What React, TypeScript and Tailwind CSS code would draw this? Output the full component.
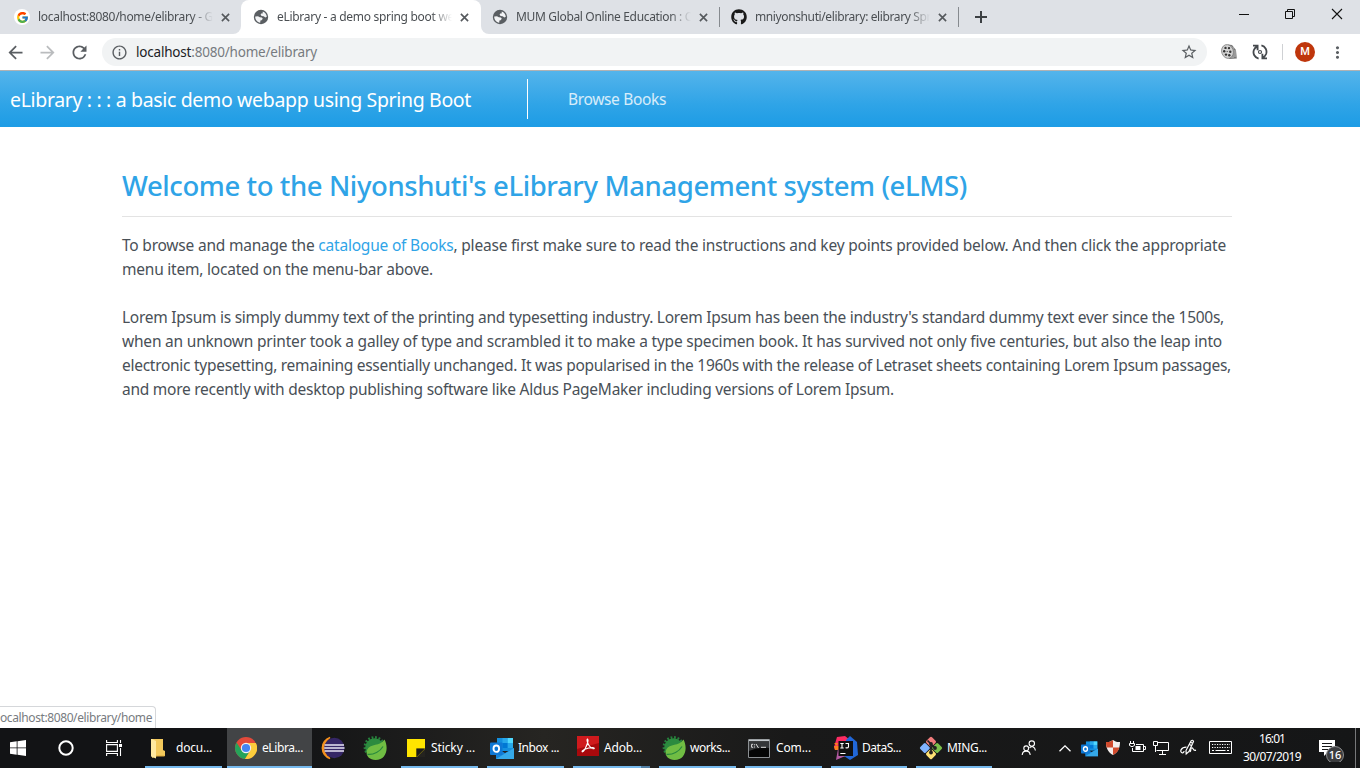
import { useLayoutEffect, useRef } from "react";
import type { ReactNode } from "react";
import { FcGoogle } from "react-icons/fc";
import { FaGithub } from "react-icons/fa";
import {
  MdArrowBack,
  MdArrowForward,
  MdRefresh,
  MdInfoOutline,
  MdStarBorder,
  MdMoreVert,
} from "react-icons/md";

/* One line of text whose tracking is adjusted so that it spans a given width. */
function Line({ w, className = "", children }: { w: number; className?: string; children: ReactNode }) {
  const ref = useRef<HTMLSpanElement>(null);
  useLayoutEffect(() => {
    const el = ref.current;
    if (!el) return;
    const apply = () => {
      el.style.letterSpacing = "0px";
      const natural = el.getBoundingClientRect().width;
      const count = (el.textContent || "").length;
      el.style.letterSpacing = `${(w - natural) / count}px`;
    };
    apply();
    document.fonts.ready.then(apply);
  }, [w]);
  return (
    <span ref={ref} className={`inline-block shrink-0 whitespace-pre ${className}`}>
      {children}
    </span>
  );
}

function Globe() {
  return (
    <svg width="16" height="16" viewBox="0 0 16 16" className="shrink-0">
      <circle cx="8" cy="8" r="7.2" fill="#5a5e62" />
      <path
        d="M9.8 2.6 C12 3.3 13.6 5.3 13.8 7.8 L12.4 8.6 L10.6 7.2 L8.6 7 L7.6 5.8 L8.2 4.6 L9.6 4.4 Z M2.3 7.4 L5 7.2 L6.8 8.2 L8.8 8.4 L9.8 9.8 L8.6 11.2 L7.4 11.6 L7.2 13.7 C4.4 13.4 2.3 11 2.2 8 Z"
        fill="#f2f3f5"
      />
    </svg>
  );
}

function Close() {
  return (
    <svg width="9" height="9" viewBox="0 0 10 10" className="shrink-0">
      <path d="M1 1 L9 9 M9 1 L1 9" stroke="#55595d" strokeWidth="1.8" />
    </svg>
  );
}

function Tab({
  icon,
  text,
  w,
  box,
  fade,
}: {
  icon: ReactNode;
  text: string;
  w: number;
  box: string;
  fade: string;
}) {
  return (
    <div className={`flex h-full items-center ${box}`}>
      <div className="flex w-4 shrink-0 justify-center">{icon}</div>
      <div className={`ml-2 flex h-5 items-center overflow-hidden text-[12px] text-[#4b4f53] ${fade}`}>
        <Line w={w}>{text}</Line>
      </div>
      <div className="ml-2">
        <Close />
      </div>
    </div>
  );
}

function Browser() {
  return (
    <>
      <div className="flex h-[34px] shrink-0 bg-white">
        <Tab
          box="w-[241px] rounded-br-lg bg-[#dee1e6] pl-[14px]"
          fade="w-[175px] [mask-image:linear-gradient(to_right,black_88%,transparent)]"
          w={175}
          text="localhost:8080/home/elibrary - G"
          icon={
            <span className="flex size-4 items-center justify-center rounded-full bg-white">
              <FcGoogle size={13} />
            </span>
          }
        />
        <div className="h-full w-[240px] bg-[linear-gradient(#dee1e6_50%,#fff_50%)]">
          <Tab
            box="w-[240px] rounded-t-lg bg-white pl-3"
            fade="w-[175px] [mask-image:linear-gradient(to_right,black_88%,transparent)]"
            w={177}
            text="eLibrary - a demo spring boot we"
            icon={<Globe />}
          />
        </div>
        <div className="flex h-full flex-1 rounded-bl-lg bg-[#dee1e6]">
          <Tab
            box="w-[238px] pl-[11px]"
            fade="w-[175px] [mask-image:linear-gradient(to_right,black_88%,transparent)]"
            w={176}
            text="MUM Global Online Education : C"
            icon={<Globe />}
          />
          <div className="mt-[7px] h-5 w-px bg-[#868a8f]" />
          <Tab
            box="w-[238px] pl-[11px]"
            fade="w-[175px] [mask-image:linear-gradient(to_right,black_88%,transparent)]"
            w={176}
            text="mniyonshuti/elibrary: elibrary Spr"
            icon={<FaGithub size={16} color="#191919" />}
          />
          <div className="mt-[7px] h-5 w-px bg-[#868a8f]" />
          <svg width="12" height="12" viewBox="0 0 12 12" className="mt-[11px] ml-4">
            <path d="M6 0 V12 M0 6 H12" stroke="#3c4043" strokeWidth="2" />
          </svg>
          <div className="ml-auto flex pt-2 pr-[17px]">
            <svg width="10" height="12" viewBox="0 0 10 12">
              <path d="M0 6.5 H10" stroke="#111" />
            </svg>
            <svg width="10" height="12" viewBox="0 0 10 12" className="ml-9">
              <path d="M0.5 3.5 H7.5 V10.5 H0.5 Z M2.5 3.5 V1.5 H9.5 V8.5 H7.5" fill="none" stroke="#111" />
            </svg>
            <svg width="12" height="12" viewBox="0 0 12 12" className="ml-9">
              <path d="M1 1 L11 11 M11 1 L1 11" stroke="#111" strokeWidth="1.1" />
            </svg>
          </div>
        </div>
      </div>
      <div className="flex h-9 shrink-0 items-center bg-white pl-[5px] text-[#5a5e62]">
        <MdArrowBack size={21} />
        <MdArrowForward size={21} className="ml-[11px] text-[#babcbe]" />
        <MdRefresh size={21} className="ml-[11px]" />
        <div className="ml-3 flex h-7 w-[1105px] items-center rounded-full bg-[#f1f3f4] pr-[9px] pl-[9px]">
          <MdInfoOutline size={17} />
          <Line w={181} className="ml-2 pt-px text-[13.5px] text-[#777b80]">
            <span className="text-[#202124]">localhost</span>:8080/home/elibrary
          </Line>
          <MdStarBorder size={18} className="ml-auto" />
        </div>
        <svg width="18" height="18" viewBox="0 0 18 18" className="ml-[13px]">
          <path d="M8 1.5 L12 2 L16 7 L16.8 15.5 L9 16 Z" fill="#777" />
          <path d="M11 3 V15 M13 4 V15 M15 7 V14" stroke="#ddd" strokeWidth=".7" />
          <ellipse cx="7.5" cy="8.5" rx="5.8" ry="7" transform="rotate(-18 7.5 8.5)" fill="#d2d2d2" stroke="#777" strokeWidth=".7" />
          <g fill="#333">
            <circle cx="5.5" cy="4.9" r="1.2" />
            <circle cx="9" cy="5.1" r="1.2" />
            <circle cx="4.2" cy="8.3" r="1.2" />
            <circle cx="10.3" cy="8.7" r="1.2" />
            <circle cx="6" cy="11.6" r="1.2" />
            <circle cx="9.3" cy="12.2" r="1.2" />
            <circle cx="7.2" cy="8.5" r=".6" />
          </g>
        </svg>
        <svg width="16" height="16" viewBox="0 0 16 16" className="ml-[14px]" fill="none" stroke="#45494d" strokeWidth="1.8">
          <path d="M6.6 14.6 C2.6 13.6 .6 9.6 1.9 6 C2.6 4.2 3.8 3.2 5 2.6 M1 1.7 H5.6 V6.2" />
          <path d="M9.4 1.4 C13.4 2.4 15.4 6.4 14.1 10 C13.4 11.8 12.2 12.8 11 13.4 M15 14.3 H10.4 V9.8" />
          <circle cx="8" cy="8" r="1.5" strokeWidth="1.2" />
        </svg>
        <div className="ml-[14px] h-4 w-px bg-[#cfd1d4]" />
        <div className="ml-3 flex size-5 items-center justify-center rounded-full bg-[#bf360c] font-[Roboto] text-[11px] font-medium text-white">
          M
        </div>
        <MdMoreVert size={19} className="ml-[13px]" />
      </div>
    </>
  );
}

function Page() {
  return (
    <>
      <div className="h-px shrink-0 bg-[#b0b2b4]" />
      <header className="flex h-14 shrink-0 items-center bg-[linear-gradient(#54b4eb,#2fa4e7_60%,#1d9ce5)] pl-[10px] text-white">
        <Line w={461} className="pt-[2px] text-[19.5px]">
          eLibrary : : : a basic demo webapp using Spring Boot
        </Line>
        <div className="ml-14 h-10 w-px bg-white" />
        <Line w={98} className="ml-10 pt-px text-[15.5px] text-white/80">
          Browse Books
        </Line>
      </header>
      <main className="min-h-0 flex-1 bg-white pr-32 pl-[122px] text-[#495057]">
        <h2 className="flex h-[90px] items-center border-b border-[#e3e3e3] pt-[28px] text-[#2fa4e7]">
          <Line w={845} className="text-[27.5px] font-medium">
            Welcome to the Niyonshuti's eLibrary Management system (eLMS)
          </Line>
        </h2>
        <p className="flex flex-col items-start pt-4 text-[15.5px] leading-6">
          <Line w={1104}>
            To browse and manage the <a className="text-[#2fa4e7]">catalogue of Books</a>, please first make sure to read
            {" the instructions and key points provided below. And then click the appropriate"}
          </Line>
          <Line w={311}>menu item, located on the menu-bar above.</Line>
        </p>
        <p className="flex flex-col items-start pt-6 text-[15.5px] leading-6">
          <Line w={1102}>
            Lorem Ipsum is simply dummy text of the printing and typesetting industry. Lorem Ipsum has been the industry's standard dummy text ever since the 1500s,
          </Line>
          <Line w={1100}>
            when an unknown printer took a galley of type and scrambled it to make a type specimen book. It has survived not only five centuries, but also the leap into
          </Line>
          <Line w={1109}>
            electronic typesetting, remaining essentially unchanged. It was popularised in the 1960s with the release of Letraset sheets containing Lorem Ipsum passages,
          </Line>
          <Line w={772}>
            and more recently with desktop publishing software like Aldus PageMaker including versions of Lorem Ipsum.
          </Line>
        </p>
      </main>
      <div className="flex h-[22px] w-[156px] shrink-0 items-center overflow-hidden rounded-tr border-t border-r border-[#d5d7da] bg-white text-[12px] text-[#777b80]">
        <Line w={152} className="pt-px">ocalhost:8080/elibrary/home</Line>
      </div>
    </>
  );
}

function Spring() {
  return (
    <svg width="24" height="24" viewBox="0 0 24 24">
      <circle cx="11.5" cy="11" r="9.6" fill="none" stroke="#26823c" strokeWidth="2.6" strokeDasharray="1.8 1.7" />
      <circle cx="11.5" cy="11.5" r="9.3" fill="#2c8b3f" />
      <path d="M21.5 3.5 C26 12 23.5 24 12.5 24 C5 24 2 18 4.4 13.2 C7.5 7.5 17 10.5 21.5 3.5 Z" fill="#70bd43" />
      <path d="M4.5 18.4 C11 19 17 15.5 20 10.5" fill="none" stroke="#29893e" strokeWidth="1.2" />
    </svg>
  );
}

function Outlook({ size }: { size: number }) {
  return (
    <svg width={size} height={size} viewBox="0 0 24 24">
      <path d="M7 2 H23 V15 H7 Z" fill="#1490df" />
      <path d="M12.5 2 H17.7 V7 H12.5 Z" fill="#28a8ea" />
      <path d="M17.7 2 H23 V7 H17.7 Z" fill="#50d9ff" />
      <path d="M12.5 7 H17.7 V12 H12.5 Z" fill="#0078d4" />
      <path d="M17.7 7 H23 V12 H17.7 Z" fill="#28a8ea" />
      <path d="M6 12 L15 17 L24 12 V23 H6 Z" fill="#1684d8" />
      <path d="M6 23 L24 12 V23 Z" fill="#35a9e9" />
      <rect x="0" y="6.5" width="12.5" height="12.5" rx="1" fill="#0f78d4" />
      <ellipse cx="6.3" cy="12.7" rx="2.8" ry="3.2" fill="none" stroke="#fff" strokeWidth="1.9" />
    </svg>
  );
}

function Task({
  box,
  bar = "bg-[#76b9ed]",
  slot,
  gap = "pl-1",
  icon,
  text,
  w,
}: {
  box: string;
  bar?: string;
  slot: string;
  gap?: string;
  icon: ReactNode;
  text: string;
  w: number;
}) {
  return (
    <div className={`flex h-10 shrink-0 flex-col ${box}`}>
      <div className="flex h-[38px] items-center">
        <div className={`flex shrink-0 justify-center pt-[2px] ${slot}`}>{icon}</div>
        <div className={`flex ${gap}`}>
          <Line w={w} className="pt-[2px] text-[12px] text-white">
            {text}
          </Line>
        </div>
      </div>
      <div className={`h-[2px] ${bar}`} />
    </div>
  );
}

function Taskbar() {
  return (
    <footer className="flex h-10 shrink-0 bg-[linear-gradient(to_right,#121315,#121315_20%,#262522_40%,#191919_58%,#151617)] text-white">
      <div className="flex w-9 items-center justify-center">
        <svg width="16" height="16" viewBox="0 0 16 16" fill="#fff">
          <path d="M0 2.2 L6.7 1.3 V7.5 H0 Z M7.5 1.2 L16 0 V7.5 H7.5 Z M0 8.3 H6.7 V14.7 L0 13.8 Z M7.5 8.3 H16 V16 L7.5 14.8 Z" />
        </svg>
      </div>
      <div className="flex w-[60px] items-center justify-center">
        <svg width="18" height="18" viewBox="0 0 18 18">
          <circle cx="9" cy="9" r="6.7" fill="none" stroke="#fff" strokeWidth="2" />
        </svg>
      </div>
      <div className="flex w-[36px] items-center justify-center">
        <svg width="17" height="16" viewBox="0 0 17 16" fill="none" stroke="#fff" strokeWidth="1.1">
          <path d="M.6 0 V2.5 H11.4 V0 M.6 16 V13.5 H11.4 V16 M.6 4.6 H11.4 V11.4 H.6 Z M14.5 0 V3 M14.5 8 V16" />
          <path d="M13 4 H16 V7 H13 Z" fill="#fff" stroke="none" />
        </svg>
      </div>
      <Task
        box="ml-[13px] w-[77px]"
        slot="w-[27px]"
        w={36}
        text="docu..."
        icon={
          <svg width="15" height="21" viewBox="0 0 15 21">
            <path d="M1 1 H12 V12 L14 13 V18 H6 L1 20 Z" fill="#f3c95c" />
            <path d="M1 1 L5 3 V20.5 L0 18.5 V1 Z" fill="#ffe9a0" />
            <path d="M5 18 H13.5" stroke="#dba83b" />
          </svg>
        }
      />
      <Task
        box="ml-[5px] w-[85px] bg-[#424446]"
        slot="w-[38px]"
        gap="-ml-[3px]"
        w={41}
        text="eLibra..."
        icon={
          <svg width="22" height="22" viewBox="0 0 22 22">
            <circle cx="11" cy="11" r="11" fill="#e24a3b" />
            <path d="M1.5 5.5 A11 11 0 0 0 10 22 L15.3 13.5 L11 11 L6.7 13.5 Z" fill="#25a35a" />
            <path d="M20.6 5.5 A11 11 0 0 1 10 22 L15.3 13.5 A5 5 0 0 0 11 6 L20.8 6 Z" fill="#fccd3c" />
            <circle cx="11" cy="11" r="5.2" fill="#f3f3f3" />
            <circle cx="11" cy="11" r="4.1" fill="#4285f4" />
          </svg>
        }
      />
      <div className="flex w-[42px] items-center justify-center">
        <svg width="24" height="24" viewBox="0 0 24 24">
          <path d="M9 1.5 A11 11 0 0 0 9 22.5 A13 13 0 0 1 9 1.5 Z" fill="#f6921e" stroke="#f6921e" strokeWidth="1.4" />
          <circle cx="13.3" cy="12" r="10.2" fill="#352666" />
          <path d="M3.6 9 H23 M3.2 12 H23.5 M3.6 15 H23" stroke="#e8e5f4" strokeWidth="1.5" />
        </svg>
      </div>
      <div className="flex w-[42px] items-center justify-center">
        <Spring />
      </div>
      <Task
        box="ml-[5px] w-[77px]"
        slot="w-[28px] pl-[2px]"
        gap="pl-[2px]"
        w={44}
        text="Sticky ..."
        icon={
          <svg width="18" height="18" viewBox="0 0 18 18">
            <path d="M0 0 H18 V18 H0 Z" fill="#ffe500" />
            <path d="M9 18 V9.5 H18 V18 Z" fill="#a39300" />
            <path d="M9.5 9.5 H18 L9.5 18 Z" fill="#1b1b1b" />
            <path d="M10 18 L18 10 V18 Z" fill="#24231f" />
          </svg>
        }
      />
      <Task box="ml-[9px] w-[77px]" slot="w-[30px]" gap="pl-px" w={41} text="Inbox ..." icon={<Outlook size={24} />} />
      <Task
        box="ml-[9px] w-[77px]"
        bar="bg-[linear-gradient(to_right,#76b9ed_68px,#527fa4_68px)]"
        slot="w-[30px]"
        gap="pl-px"
        w={38}
        text="Adob..."
        icon={
          <svg width="22" height="20" viewBox="0 0 22 20" className="-mt-1">
            <path d="M0 0 H22 V20 H0 Z" fill="#a8090c" />
            <path d="M0 0 H22 V7 L0 13 Z" fill="#cf1a1d" />
            <path
              d="M10.5 3 C9 3.5 11.2 9.2 13.8 11.6 C15.6 13.2 17.7 13 17.2 12 C16.2 10.7 7.6 12.3 5.3 14.8 C4.5 16.2 6 16.4 7.4 14 C9 11.2 12.1 4.4 10.5 3 Z"
              fill="none"
              stroke="#fff"
              strokeWidth="1.1"
            />
          </svg>
        }
      />
      <Task box="ml-[9px] w-[77px]" slot="w-[30px]" gap="pl-px" w={40} text="works..." icon={<Spring />} />
      <Task
        box="ml-[9px] w-[77px]"
        slot="w-[28px]"
        gap="pl-[3px]"
        w={35}
        text="Com..."
        icon={
          <svg width="22" height="19" viewBox="0 0 22 19">
            <path d="M.5 .5 H21.5 V18.5 H.5 Z" fill="#050505" stroke="#8b8f92" />
            <path d="M1 3 H21 V9 Q10 8 1 12 Z" fill="#343638" />
            <path d="M1 1.5 H21" stroke="#c4c9cd" strokeWidth="1.6" />
            <path d="M5.2 5.3 H3.6 V8.3 H5.2 M6.5 5.3 V6.3 M6.5 7.5 V8.5 M8 5 L10.5 9 M13 8.3 H18" fill="none" stroke="#ddd" strokeWidth="1" />
          </svg>
        }
      />
      <Task
        box="ml-[9px] w-[76px]"
        slot="w-[30px]"
        gap="pl-px"
        w={39}
        text="DataS..."
        icon={
          <svg width="24" height="24" viewBox="0 0 24 24">
            <path d="M3 1 L11 0 L16 4 L12 14 L1 14 L0 11 Z" fill="#fc2b62" />
            <path d="M0 10 L6 10 L5 14 L1 14 Z M4 7 H0 L3 10 Z" fill="#fc801d" />
            <path d="M4 13 L13 20 L9 21 L2 24 Z" fill="#b45aa3" />
            <path d="M16 0 L23 6 L24 19 L16 24 L10 20 L12 4 Z" fill="#2167d8" />
            <rect x="4.5" y="5" width="14.5" height="15" fill="#111" />
            <path d="M6.3 7.5 H9.7 M8 7.5 V12 M6.3 12 H9.7 M11.5 7.5 H14.5 V10.8 Q14.2 12.2 11.5 11.8 M6.3 17.5 H11.5" fill="none" stroke="#fff" strokeWidth="1.1" />
          </svg>
        }
      />
      <Task
        box="ml-[9px] w-[76px]"
        slot="w-[30px]"
        gap="pl-px"
        w={40}
        text="MING..."
        icon={
          <svg width="24" height="24" viewBox="0 0 24 24">
            <g transform="rotate(45 12 12)">
              <rect x="3.7" y="3.7" width="7.9" height="7.9" rx="1.5" fill="#f17c7c" />
              <rect x="12.4" y="3.7" width="7.9" height="7.9" rx="1.5" fill="#7cc04b" />
              <rect x="3.7" y="12.4" width="7.9" height="7.9" rx="1.5" fill="#80b3ff" />
              <rect x="12.4" y="12.4" width="7.9" height="7.9" rx="1.5" fill="#ffe174" />
            </g>
            <path d="M8.5 4.5 L12 8 V17 M12 8.5 L16 12" fill="none" stroke="#231f20" strokeWidth="1.7" />
            <circle cx="12" cy="8" r="1.9" fill="#231f20" />
            <circle cx="12" cy="16.5" r="1.9" fill="#231f20" />
            <circle cx="16" cy="12" r="1.9" fill="#231f20" />
          </svg>
        }
      />
      <div className="ml-6 flex w-[26px] items-center justify-center">
        <svg width="16" height="16" viewBox="0 0 16 16" fill="none" stroke="#fff" strokeWidth="1.1">
          <circle cx="10.8" cy="3.6" r="2.7" />
          <path d="M8.6 8 C10 5.6 14 6.5 14.4 10.5" />
          <circle cx="5.2" cy="8.3" r="2.4" />
          <path d="M1.2 15 C1.5 9.8 8.8 9.8 9.2 15" />
        </svg>
      </div>
      <div className="ml-[11px] flex w-6 items-center justify-center">
        <svg width="12" height="7" viewBox="0 0 12 7">
          <path d="M.5 6.3 L6 .9 L11.5 6.3" fill="none" stroke="#fff" strokeWidth="1.3" />
        </svg>
      </div>
      <div className="flex w-6 items-center justify-center">
        <Outlook size={17} />
      </div>
      <div className="flex w-6 items-center justify-center">
        <svg width="14" height="15" viewBox="0 0 14 15" className="-mt-px">
          <path d="M0 2 C3 2.3 5 1.5 7 0 C9 1.5 11 2.3 14 2 C14 8 12 12.5 7 15 C2 12.5 0 8 0 2 Z" fill="#f5eeec" />
          <path d="M7 0 V7.5 H.7 C.1 5.5 0 4 0 2 C3 2.3 5 1.5 7 0 Z M7 7.5 H13.4 C12.4 11 10.5 13.3 7 15 Z" fill="#d24a2c" />
        </svg>
      </div>
      <div className="flex w-6 items-center justify-center">
        <svg width="17" height="13" viewBox="0 0 17 13" className="-mt-px" fill="none" stroke="#fff" strokeWidth="1">
          <path d="M7 3.5 H14.5 V10.5 H3.5 V7 M14.5 5.5 H16.5 V8.5 H14.5" />
          <path d="M6.5 5 H11.5 V9 H6.5 Z" fill="#fff" stroke="none" />
          <path d="M1.5 0 V2 M4.5 0 V2 M.5 2.5 H5.5 V4.5 Q3 7 .5 4.5 Z" />
        </svg>
      </div>
      <div className="flex w-6 items-center justify-center">
        <svg width="17" height="14" viewBox="0 0 17 14" fill="none" stroke="#fff" strokeWidth="1">
          <path d="M5 1.5 H15.5 V9.5 H3.5 M9.5 9.5 V13 M6 13.5 H13 M.5 .5 H4.5 V4.5 H.5 Z M2.5 4.5 V11" />
        </svg>
      </div>
      <div className="ml-[3px] flex w-6 items-center justify-center">
        <svg width="17" height="17" viewBox="0 0 17 17" className="-mt-px" fill="none" stroke="#fff" strokeWidth="1.2">
          <path d="M6 11.5 L11 2 Q12.8 .3 13.5 2.5 L9 12.5 L6.2 15 Z M10.5 3.2 L13 4.6 M9.5 5.5 L11.8 6.8" />
          <path d="M6.5 8.2 C1 8 -.8 13 2.3 13.8 Q4 14 4 12 M9.5 12.5 C11.5 13.5 10 8.5 12 8.8 C14 9.2 12.5 12.2 16 11.2" />
        </svg>
      </div>
      <div className="ml-2 flex w-6 items-center justify-center">
        <svg width="23" height="13" viewBox="0 0 23 13" className="-mt-px" fill="none" stroke="#fff">
          <path d="M.5 .5 H22.5 V12.5 H.5 Z" />
          <path d="M3 3.5 H21 M3 6.5 H21" strokeDasharray="1.2 1.3" />
          <path d="M3 9.5 H5 M6.5 9.5 H16.5 M18 9.5 H20" />
        </svg>
      </div>
      <div className="ml-[10px] flex w-[60px] flex-col items-center text-[12px] leading-[18px]">
        <Line w={26} className="pt-[2px]">16:01</Line>
        <Line w={58}>30/07/2019</Line>
      </div>
      <div className="ml-[16px] flex w-[28px] items-center">
        <svg width="28" height="28" viewBox="0 0 28 28">
          <path d="M1 6 H17 V18 H10 L6 22 V18 H1 Z" fill="#fff" />
          <path d="M4 9.5 H14 M4 12.5 H14 M4 15.5 H10" stroke="#171819" />
          <circle cx="17" cy="21" r="8.5" fill="#3b3c3e" stroke="#8c8d8f" strokeWidth="1" />
          <text x="17" y="25" textAnchor="middle" fontFamily="Noto Sans, sans-serif" fontSize="11" fontWeight="500" fill="#fff">
            16
          </text>
        </svg>
      </div>
      <div className="ml-auto h-10 w-[5px] border-l border-[#77787a]" />
    </footer>
  );
}

export default function App() {
  return (
    <div className="flex h-[768px] w-[1360px] flex-col overflow-hidden bg-white font-['Noto_Sans',sans-serif]">
      <Browser />
      <Page />
      <Taskbar />
    </div>
  );
}
